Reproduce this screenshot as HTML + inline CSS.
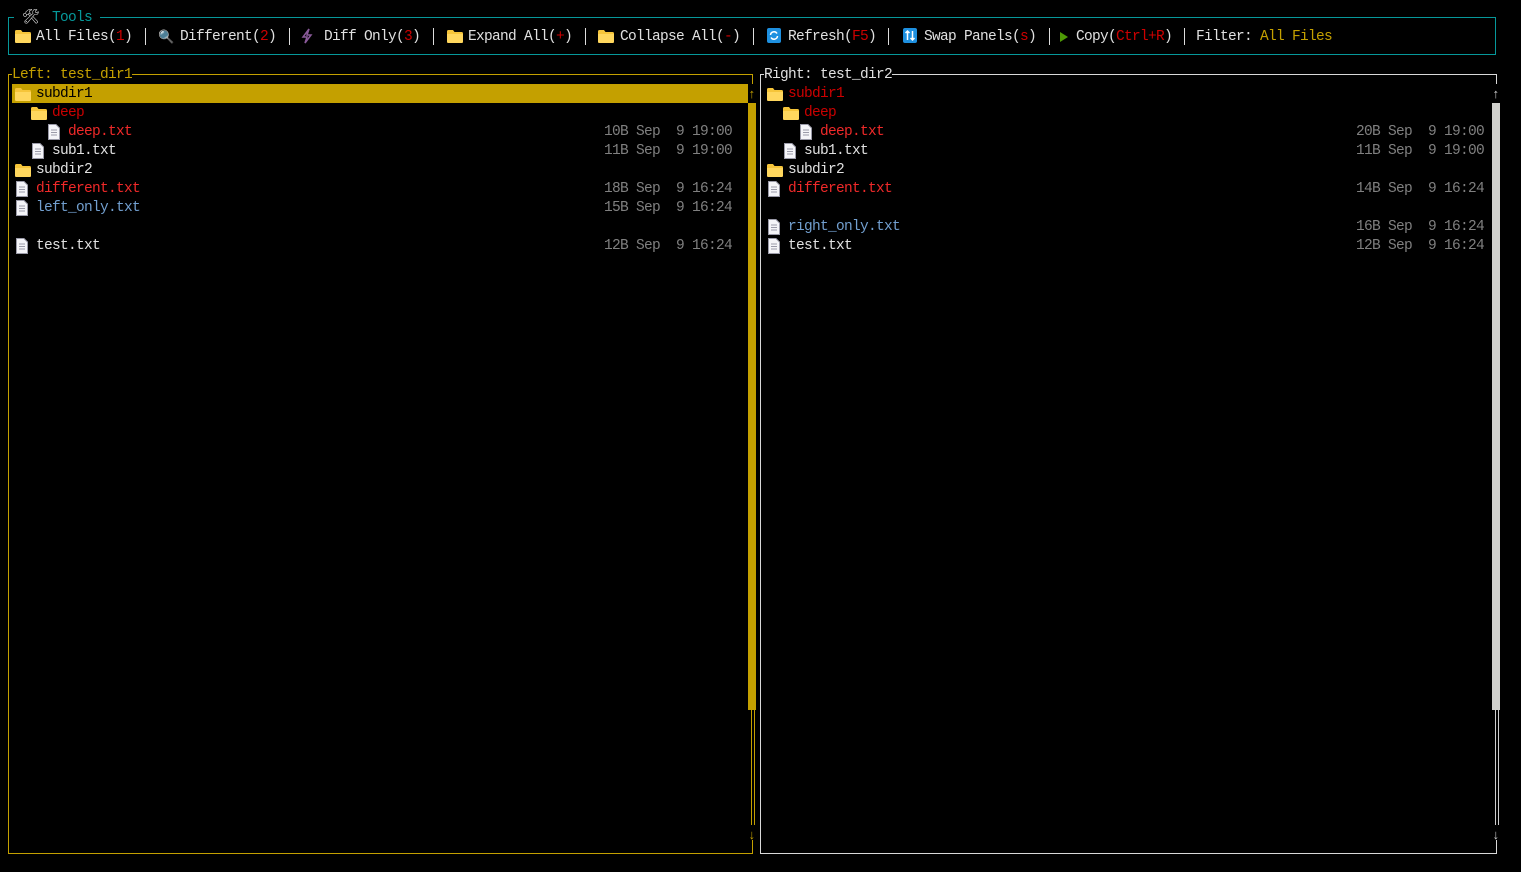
<!DOCTYPE html>
<html><head><meta charset="utf-8"><style>
html,body{margin:0;padding:0;background:#000;width:1521px;height:872px;overflow:hidden}
body{position:relative;font-family:"Liberation Mono","DejaVu Sans Mono",monospace;font-size:14.5px;letter-spacing:-0.7px;color:#e0e0e0}
.t{position:absolute;line-height:19px;height:19px;white-space:pre;margin-top:3px}
.l{position:absolute}
.r{color:#cc0000}.br{color:#ef2929}.b{color:#729fcf}.g{color:#808080}.y{color:#c4a000}.c{color:#06989a}.w{color:#e8e8e8}
.fo{position:absolute;width:16px;height:13px}
.fi{position:absolute;width:12px;height:16px}
</style></head><body>
<svg width="0" height="0" style="position:absolute">
<defs>
<symbol id="fold" viewBox="0 0 16 13"><path d="M0 1.5Q0 0 1.5 0H6L7.5 2H14.5Q16 2 16 3.5V11.5Q16 13 14.5 13H1.5Q0 13 0 11.5Z" fill="#f6c53a"/><path d="M0 4H16V11.5Q16 13 14.5 13H1.5Q0 13 0 11.5Z" fill="#ffd75e"/></symbol>
<symbol id="file" viewBox="0 0 12 16"><path d="M0.5 0.5H8L11.5 4V15.5H0.5Z" fill="#f4f4f8" stroke="#9a9aa8"/><path d="M3 6H9M3 8.5H9M3 11H9" stroke="#9a9aa8"/></symbol>
</defs></svg>

<div class="l" style="left:8px;top:17px;width:1488px;height:38px;border:1px solid #06989a;box-sizing:border-box"></div>
<div class="l" style="left:14px;top:10px;width:86px;height:14px;background:#000"></div>
<div class="t" style="left:22px;top:6px;font-size:14px;letter-spacing:0">🛠</div>
<div class="t c" style="left:52px;top:6px">Tools</div>

<svg class="fo" style="left:15px;top:30px"><use href="#fold"/></svg>
<div class="t" style="left:36px;top:25px">All Files(<span class="r">1</span>)</div>
<div class="l" style="left:145px;top:28px;width:1px;height:17px;background:#ddd"></div>
<div class="t" style="left:158px;top:25px;font-size:13px;letter-spacing:0">🔍</div>
<div class="t" style="left:180px;top:25px">Different(<span class="r">2</span>)</div>
<div class="l" style="left:289px;top:28px;width:1px;height:17px;background:#ddd"></div>
<svg class="l" style="left:300px;top:28px" width="14" height="16" viewBox="0 0 14 16"><path d="M9 1L3 9H7L5 15L11 7H7Z" fill="none" stroke="#8a5a9a" stroke-width="1.5"/></svg>
<div class="t" style="left:324px;top:25px">Diff Only(<span class="r">3</span>)</div>
<div class="l" style="left:433px;top:28px;width:1px;height:17px;background:#ddd"></div>
<svg class="fo" style="left:447px;top:30px"><use href="#fold"/></svg>
<div class="t" style="left:468px;top:25px">Expand All(<span class="r">+</span>)</div>
<div class="l" style="left:585px;top:28px;width:1px;height:17px;background:#ddd"></div>
<svg class="fo" style="left:598px;top:30px"><use href="#fold"/></svg>
<div class="t" style="left:620px;top:25px">Collapse All(<span class="r">-</span>)</div>
<div class="l" style="left:753px;top:28px;width:1px;height:17px;background:#ddd"></div>
<svg class="l" style="left:767px;top:28px" width="14" height="15" viewBox="0 0 14 15"><rect width="14" height="15" rx="2" fill="#1e90e0"/><path d="M3.5 7A3.5 3.5 0 0 1 10 5.5M10.5 8A3.5 3.5 0 0 1 4 9.5" stroke="#fff" stroke-width="1.5" fill="none"/></svg>
<div class="t" style="left:788px;top:25px">Refresh(<span class="r">F5</span>)</div>
<div class="l" style="left:888px;top:28px;width:1px;height:17px;background:#ddd"></div>
<svg class="l" style="left:903px;top:28px" width="14" height="15" viewBox="0 0 14 15"><rect width="14" height="15" rx="2" fill="#1e90e0"/><path d="M4.5 12V3M2.5 5L4.5 3L6.5 5M9.5 3V12M7.5 10L9.5 12L11.5 10" stroke="#fff" stroke-width="1.5" fill="none"/></svg>
<div class="t" style="left:924px;top:25px">Swap Panels(<span class="r">s</span>)</div>
<div class="l" style="left:1049px;top:28px;width:1px;height:17px;background:#ddd"></div>
<svg class="l" style="left:1060px;top:32px" width="8" height="10"><path d="M0 0L8 5L0 10Z" fill="#4e9a06"/></svg>
<div class="t" style="left:1076px;top:25px">Copy(<span class="r">Ctrl+R</span>)</div>
<div class="l" style="left:1184px;top:28px;width:1px;height:17px;background:#ddd"></div>
<div class="t" style="left:1196px;top:25px">Filter: <span class="y">All Files</span></div>

<div class="l" style="left:8px;top:74px;width:745px;height:780px;border:1px solid #c4a000;border-right:none;box-sizing:border-box"></div>
<div class="l" style="left:752px;top:74px;width:1px;height:10px;background:#c4a000"></div>
<div class="l" style="left:752px;top:840px;width:1px;height:14px;background:#c4a000"></div>
<div class="l" style="left:12px;top:68px;width:120px;height:12px;background:#000"></div>
<div class="t y" style="left:12px;top:63px">Left: test_dir1</div>
<div class="l" style="left:12px;top:84px;width:736px;height:19px;background:#c4a000"></div>
<div class="t y" style="left:748px;top:82px;font-size:13px;letter-spacing:0">↑</div>
<div class="l" style="left:748px;top:103px;width:8px;height:607px;background:#c4a000"></div>
<div class="l" style="left:751px;top:710px;width:1px;height:115px;background:#c4a000"></div>
<div class="l" style="left:754px;top:710px;width:1px;height:115px;background:#c4a000"></div>
<div class="t y" style="left:748px;top:823px;font-size:13px;letter-spacing:0">↓</div>

<svg class="fo" style="left:15px;top:88px"><use href="#fold"/></svg><div class="t" style="left:36px;top:82px;color:#000">subdir1</div>
<svg class="fo" style="left:31px;top:107px"><use href="#fold"/></svg><div class="t r" style="left:52px;top:101px">deep</div>
<svg class="fi" style="left:48px;top:124px"><use href="#file"/></svg><div class="t br" style="left:68px;top:120px">deep.txt</div><div class="t g" style="left:604px;top:120px">10B Sep  9 19:00</div>
<svg class="fi" style="left:32px;top:143px"><use href="#file"/></svg><div class="t" style="left:52px;top:139px">sub1.txt</div><div class="t g" style="left:604px;top:139px">11B Sep  9 19:00</div>
<svg class="fo" style="left:15px;top:164px"><use href="#fold"/></svg><div class="t" style="left:36px;top:158px">subdir2</div>
<svg class="fi" style="left:16px;top:181px"><use href="#file"/></svg><div class="t br" style="left:36px;top:177px">different.txt</div><div class="t g" style="left:604px;top:177px">18B Sep  9 16:24</div>
<svg class="fi" style="left:16px;top:200px"><use href="#file"/></svg><div class="t b" style="left:36px;top:196px">left_only.txt</div><div class="t g" style="left:604px;top:196px">15B Sep  9 16:24</div>
<svg class="fi" style="left:16px;top:238px"><use href="#file"/></svg><div class="t" style="left:36px;top:234px">test.txt</div><div class="t g" style="left:604px;top:234px">12B Sep  9 16:24</div>

<div class="l" style="left:760px;top:74px;width:737px;height:780px;border:1px solid #d8d8d8;border-right:none;box-sizing:border-box"></div>
<div class="l" style="left:1496px;top:74px;width:1px;height:10px;background:#d8d8d8"></div>
<div class="l" style="left:1496px;top:840px;width:1px;height:14px;background:#d8d8d8"></div>
<div class="l" style="left:764px;top:68px;width:128px;height:12px;background:#000"></div>
<div class="t" style="left:764px;top:63px">Right: test_dir2</div>
<div class="t" style="left:1492px;top:82px;font-size:13px;letter-spacing:0;color:#ccc">↑</div>
<div class="l" style="left:1492px;top:103px;width:8px;height:607px;background:#d0d0cc"></div>
<div class="l" style="left:1495px;top:710px;width:1px;height:115px;background:#ccc"></div>
<div class="l" style="left:1498px;top:710px;width:1px;height:115px;background:#ccc"></div>
<div class="t" style="left:1492px;top:823px;font-size:13px;letter-spacing:0;color:#ccc">↓</div>

<svg class="fo" style="left:767px;top:88px"><use href="#fold"/></svg><div class="t r" style="left:788px;top:82px">subdir1</div>
<svg class="fo" style="left:783px;top:107px"><use href="#fold"/></svg><div class="t r" style="left:804px;top:101px">deep</div>
<svg class="fi" style="left:800px;top:124px"><use href="#file"/></svg><div class="t br" style="left:820px;top:120px">deep.txt</div><div class="t g" style="left:1356px;top:120px">20B Sep  9 19:00</div>
<svg class="fi" style="left:784px;top:143px"><use href="#file"/></svg><div class="t" style="left:804px;top:139px">sub1.txt</div><div class="t g" style="left:1356px;top:139px">11B Sep  9 19:00</div>
<svg class="fo" style="left:767px;top:164px"><use href="#fold"/></svg><div class="t" style="left:788px;top:158px">subdir2</div>
<svg class="fi" style="left:768px;top:181px"><use href="#file"/></svg><div class="t br" style="left:788px;top:177px">different.txt</div><div class="t g" style="left:1356px;top:177px">14B Sep  9 16:24</div>
<svg class="fi" style="left:768px;top:219px"><use href="#file"/></svg><div class="t b" style="left:788px;top:215px">right_only.txt</div><div class="t g" style="left:1356px;top:215px">16B Sep  9 16:24</div>
<svg class="fi" style="left:768px;top:238px"><use href="#file"/></svg><div class="t" style="left:788px;top:234px">test.txt</div><div class="t g" style="left:1356px;top:234px">12B Sep  9 16:24</div>
</body></html>
